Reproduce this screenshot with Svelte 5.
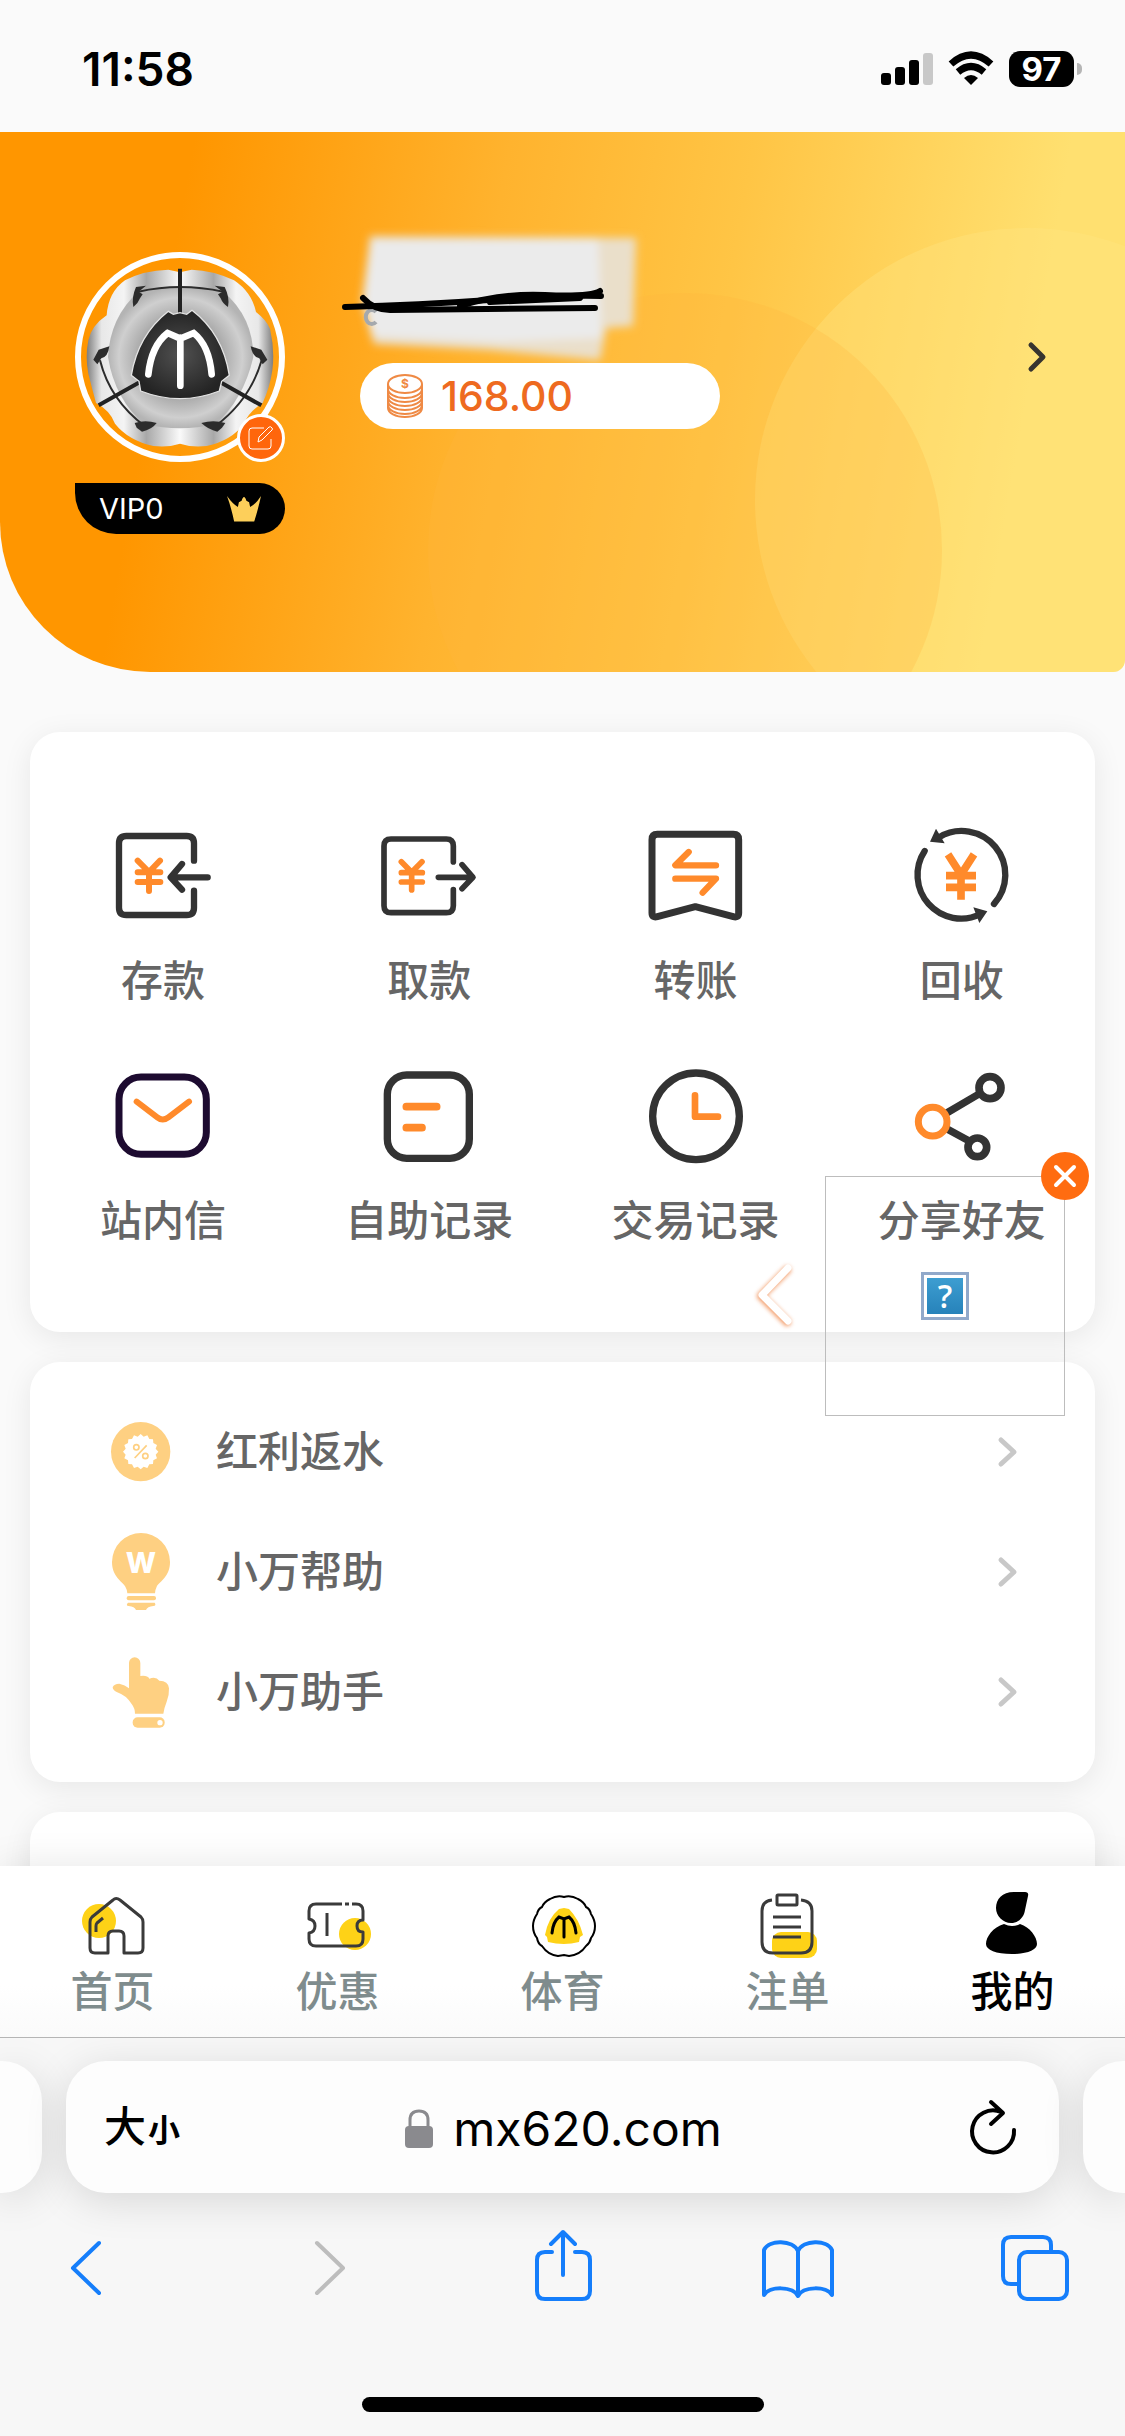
<script>
  const actions = [
    { icon: 'deposit', label: '存款' },
    { icon: 'withdraw', label: '取款' },
    { icon: 'transfer', label: '转账' },
    { icon: 'recycle', label: '回收' },
    { icon: 'mail', label: '站内信' },
    { icon: 'records', label: '自助记录' },
    { icon: 'history', label: '交易记录' },
    { icon: 'share', label: '分享好友' },
  ];

  const links = [
    { icon: 'rebate', label: '红利返水' },
    { icon: 'help', label: '小万帮助' },
    { icon: 'assistant', label: '小万助手' },
  ];

  const tabs = [
    { icon: 'home', label: '首页' },
    { icon: 'coupon', label: '优惠' },
    { icon: 'sports', label: '体育' },
    { icon: 'orders', label: '注单' },
    { icon: 'me', label: '我的', active: true },
  ];

  // Serrated edge of the discount seal
  const seal = Array.from({ length: 32 }, (_, i) => {
    const r = i % 2 ? 46 : 53;
    const a = (i * Math.PI) / 16;
    return `${Math.round(242 + r * Math.cos(a))},${Math.round(215 + r * Math.sin(a))}`;
  }).join(' ');

  let widgetOpen = $state(true);
</script>

{#snippet actionIcon(name)}
  {#if name === 'deposit'}
    <svg class="action-icon" viewBox="165 84 288 288" aria-hidden="true">
      <g class="ink" stroke-width="19">
        <path d="M402 182V130Q402 108 380 108H199Q177 108 177 130V323Q177 345 199 345H380Q402 345 402 323V272" />
        <path d="M334 232H443M366 192L332 232L366 269" />
      </g>
      <path class="amber" stroke-width="18" d="M233 182L267 216L300 182M233 217H301M233 246H301M267 216V273" />
    </svg>
  {:else if name === 'withdraw'}
    <svg class="action-icon" viewBox="963 84 288 288" aria-hidden="true">
      <g class="ink" stroke-width="17">
        <path d="M1180 186V138Q1180 117 1159 117H993Q972 117 972 138V317Q972 338 993 338H1159Q1180 338 1180 317V269" />
        <path d="M1135 232H1236M1206 194L1239 232L1206 266" />
      </g>
      <path class="amber" stroke-width="17" d="M1024 185L1055 217L1086 185M1024 218H1087M1024 246H1087M1055 217V270" />
    </svg>
  {:else if name === 'transfer'}
    <svg class="action-icon" viewBox="0 0 288 288" aria-hidden="true">
      <path class="ink" stroke-width="21" d="M28 19H256Q272 19 272 35V255Q272 270 256 266L142 236L28 266Q12 270 12 255V35Q12 19 28 19Z" />
      <path class="amber" stroke-width="19" d="M122 72L82 112H204M82 152H204L164 194" />
    </svg>
  {:else if name === 'recycle'}
    <svg class="action-icon" viewBox="0 0 288 288" aria-hidden="true">
      <path class="ink" stroke-width="19" d="M240 228A131 131 0 0 0 75 28M32 69A131 131 0 0 0 200 258" />
      <path fill="#333" d="M48 41L66 2L92 46ZM178 238L220 250L196 285Z" />
      <path fill="none" stroke="#ff8a2b" stroke-width="23" d="M102 79L141 140L180 79M141 138V215M96 143H186M96 178H186" />
    </svg>
  {:else if name === 'mail'}
    <svg class="action-icon" viewBox="165 804 288 288" aria-hidden="true">
      <rect x="177" y="831" width="262" height="232" rx="66" fill="none" stroke="#1d0b30" stroke-width="21" />
      <path class="amber" stroke-width="18" d="M230 905L292 952Q308 965 325 952L387 905" />
    </svg>
  {:else if name === 'records'}
    <svg class="action-icon" viewBox="963 804 288 288" aria-hidden="true">
      <rect class="ink" x="982" y="825" width="246" height="250" rx="58" stroke-width="22" />
      <path class="amber" stroke-width="23" d="M1039 920H1130M1039 983H1086" />
    </svg>
  {:else if name === 'history'}
    <svg class="action-icon" viewBox="0 0 288 288" aria-hidden="true">
      <circle class="ink" cx="144" cy="145" r="130" stroke-width="22" />
      <path class="amber" stroke-width="20" d="M141 82V146H210" />
    </svg>
  {:else}
    <svg class="action-icon" viewBox="0 0 288 288" aria-hidden="true">
      <path class="ink" stroke-width="22" d="M98 135L193 79M98 182L160 216" />
      <circle class="ink" cx="228" cy="59" r="33" stroke-width="23" />
      <circle class="ink" cx="190" cy="238" r="28" stroke-width="23" />
      <circle class="amber" cx="56" cy="161" r="43" stroke-width="21" />
    </svg>
  {/if}
{/snippet}

{#snippet linkIcon(name)}
  {#if name === 'rebate'}
    <svg class="link-icon" viewBox="126 99 234 234" aria-hidden="true">
      <circle cx="242" cy="215" r="89" fill="#fed082" />
      <polygon points={seal} fill="#fff" />
      <g fill="none" stroke="#fed082" stroke-width="5">
        <circle cx="229" cy="202" r="8" />
        <circle cx="256" cy="228" r="8" />
        <path d="M260 196L224 234" />
      </g>
    </svg>
  {:else if name === 'help'}
    <svg class="link-icon" viewBox="126 459 234 234" aria-hidden="true">
      <g fill="#fed082">
        <path d="M243 459A87 87 0 0 1 330 546C330 590 300 603 290 620Q285 630 285 640H202Q202 630 196 620C186 603 156 590 156 546A87 87 0 0 1 243 459Z" />
        <rect x="200" y="648" width="88" height="13" rx="6" />
        <path d="M204 668H284Q290 676 280 678Q262 680 258 690H228Q224 680 206 678Q196 676 204 668Z" />
      </g>
      <text x="243" y="579" class="bulb-letter">W</text>
    </svg>
  {:else}
    <svg class="link-icon" viewBox="126 819 234 234" aria-hidden="true">
      <g fill="#fed082">
        <path d="M207 849A17 17 0 0 1 241 849V888Q262 885 268 896Q288 889 298 902Q325 902 327 925Q328 945 320 965Q312 985 310 1001H225Q225 985 215 972Q198 945 170 936Q158 930 158 922Q162 911 178 911Q195 915 207 925Z" />
        <rect x="218" y="1012" width="96" height="31" rx="15" />
      </g>
      <circle cx="300" cy="1028" r="8" fill="#fff" />
    </svg>
  {/if}
{/snippet}

{#snippet tabIcon(name)}
  <svg class="tab-icon" viewBox="0 0 66 66" aria-hidden="true">
    {#if name === 'home'}
      <circle cx="19" cy="31" r="17" fill="#fed217" />
      <g class="line">
        <path d="M28 63V46Q28 41 33 41H39Q44 41 44 46V63H58Q63 63 63 58V32Q63 29 61 27L40 10Q36 7 33 10L12 27Q10 29 10 32V58Q10 63 15 63Z" />
        <path d="M23 28L17 33Q16 34 16 36V42" />
      </g>
    {:else if name === 'coupon'}
      <circle cx="50" cy="44" r="16" fill="#fed217" />
      <g class="line">
        <path d="M37 14H11Q4 14 4 21V29Q10 30 10 36Q10 42 4 43V49Q4 56 11 56H51Q58 56 58 49V42Q52 42 52 36Q52 30 58 30V21Q58 14 51 14H47M40 14H44" />
        <path d="M22 23V46" />
      </g>
    {:else if name === 'sports'}
      <path fill="#fed217" d="M29 19L34 18L39 19Q49 29 53 45L50 47L49 52Q34 56 18 52L17 47L15 45Q18 28 29 19Z" />
      <path fill="none" stroke="#000" stroke-width="2" d="M34 7Q41 5 48 9Q54 12 56 17Q60 19 61 24Q65 30 65 36Q65 43 61 48Q60 53 56 56Q50 65 39 66L34 65L28 66Q18 65 12 56Q8 54 7 48Q3 43 3 36Q3 30 7 24Q8 19 12 17Q14 12 20 9Q27 5 34 7Z" />
      <path fill="none" stroke="#000" stroke-width="3" stroke-linecap="round" d="M22 43Q23 32 29 27L34 29L39 27Q45 32 46 43M34 29V47" />
    {:else if name === 'orders'}
      <rect x="17" y="42" width="45" height="26" rx="9" fill="#fed217" />
      <g class="line">
        <path d="M17 10Q7 11 7 21V52Q7 63 18 63H46Q57 63 57 52V21Q57 11 46 10" />
        <rect x="22" y="5" width="20" height="10" rx="1" />
        <path d="M18 27H46M18 37H46M18 47H46" />
      </g>
    {:else}
      <path d="M48 6Q49 2 45 2H34C22 2 16 9 16 18C16 26 23 33 31 33C39 33 44 27 45 20Z" />
      <path d="M24 34Q32 38 40 34C50 37 57 47 57 54C57 60 47 64 32 64C16 64 6 60 6 54C6 47 13 37 24 34Z" />
    {/if}
  </svg>
{/snippet}

<div class="phone">
  <header class="status">
    <time>11:58</time>
    <div class="indicators">
      <svg width="52" height="36" viewBox="0 0 52 36" aria-label="信号">
        <rect x="0" y="22" width="10" height="12" rx="3" />
        <rect x="14" y="16" width="10" height="18" rx="3" />
        <rect x="28" y="9" width="10" height="25" rx="3" />
        <rect x="42" y="2" width="10" height="32" rx="3" fill="#c8c8c8" />
      </svg>
      <svg width="46" height="36" viewBox="0 0 46 36" aria-label="Wi-Fi">
        <g fill="none" stroke="#000" stroke-width="7">
          <path d="M3 13Q23 -5 43 13" />
          <path d="M10 21Q23 10 36 21" />
        </g>
        <path d="M23 34L16 27Q23 21 30 27Z" />
      </svg>
      <div class="battery"><span>97</span></div>
    </div>
  </header>

  <main>
    <section class="hero">
      <svg class="hero-art" viewBox="0 0 1125 540" preserveAspectRatio="xMaxYMin slice" aria-hidden="true">
        <circle cx="1027" cy="368" r="272" fill="#ffe580" fill-opacity=".38" />
        <circle cx="685" cy="418" r="257" fill="#ffb53c" fill-opacity=".26" />
      </svg>
      <div class="profile">
        <div class="avatar">
          <svg viewBox="105 95 630 630" aria-label="头像">
            <defs>
              <linearGradient id="shell" x1="0" y1="0" x2="1" y2="0">
                <stop offset="0" stop-color="#7d7d7d" />
                <stop offset=".08" stop-color="#e8e8e8" />
                <stop offset=".2" stop-color="#f4f4f4" />
                <stop offset=".32" stop-color="#a8a8a8" />
                <stop offset=".5" stop-color="#fafafa" />
                <stop offset=".68" stop-color="#a8a8a8" />
                <stop offset=".8" stop-color="#f4f4f4" />
                <stop offset=".92" stop-color="#e8e8e8" />
                <stop offset="1" stop-color="#7d7d7d" />
              </linearGradient>
              <radialGradient id="ball">
                <stop offset="0" stop-color="#8a8a8a" />
                <stop offset=".55" stop-color="#a6a6a6" />
                <stop offset=".85" stop-color="#cfcfcf" />
                <stop offset="1" stop-color="#b4b4b4" />
              </radialGradient>
              <radialGradient id="badge">
                <stop offset="0" stop-color="#505050" />
                <stop offset="1" stop-color="#242424" />
              </radialGradient>
            </defs>
            <path fill="url(#shell)" d="M420 156L385 148Q310 150 255 180Q205 215 200 285Q155 315 145 360Q135 410 145 460Q155 500 168 548Q210 570 225 610Q265 660 340 677Q385 682 420 670Q455 682 500 677Q575 660 612 610Q625 575 668 548Q690 500 697 450Q705 390 690 325Q680 300 648 275Q635 215 582 180Q520 150 455 148Z" />
            <path fill="url(#ball)" d="M295 214Q420 186 550 214Q640 290 640 410Q610 540 525 612Q420 636 315 612Q225 540 204 410Q210 290 295 214Z" />
            <g fill="none" stroke="#2c2c2c" stroke-width="6">
              <path d="M295 214Q420 186 550 214M180 420Q210 540 315 618M665 420Q630 540 525 618" />
            </g>
            <g fill="#2c2c2c">
              <path d="M318 196L288 200Q274 232 280 260Q294 250 300 234L308 222L296 214Z" />
              <path d="M524 196L554 200Q570 232 564 260Q548 250 542 234L534 222L548 214Z" />
              <path d="M208 378L176 388L160 418L172 432L184 414Q204 410 208 378Z" />
              <path d="M632 378L664 388L682 418L668 432L658 414Q638 410 632 378Z" />
              <path d="M284 608Q316 598 350 608Q335 628 306 634L290 622Z" />
              <path d="M556 608Q520 598 484 608Q505 628 532 634L546 622Z" />
            </g>
            <path stroke="#222" stroke-width="12" fill="none" d="M420 145V290M176 555L304 483M664 555L536 483" />
            <path fill="url(#badge)" stroke="#e4e4e4" stroke-width="4" d="M385 273L400 282L420 277L440 282L456 270Q548 340 568 465L545 483L538 512Q420 558 302 512L297 483L274 465Q294 345 385 273Z" />
            <path fill="none" stroke="#fff" stroke-width="20" stroke-linecap="round" d="M325 462Q334 376 383 338L421 355L461 338Q508 376 515 462M421 352V496" />
            <circle cx="420" cy="410" r="306" fill="none" stroke="#fff" stroke-width="18" />
          </svg>
          <button class="edit" aria-label="编辑头像">
            <svg viewBox="0 0 42 42" aria-hidden="true">
              <path d="M24 11H12Q9 11 9 14V29Q9 32 12 32H28Q31 32 31 29V22M18 25L19 20L29 10Q31 9 32 11Q33 12 32 13L22 23Z" />
            </svg>
          </button>
        </div>
        <div class="account">
          <svg class="masked" viewBox="0 0 300 111" aria-label="用户名已隐藏">
            <defs>
              <filter id="soft" x="-20%" y="-20%" width="140%" height="140%">
                <feGaussianBlur stdDeviation="4" />
              </filter>
            </defs>
            <g filter="url(#soft)">
              <path fill="#eadfca" d="M10 -16L276 -14L273 74L246 76L240 108L130 98L14 92L2 50Z" />
              <path fill="#ebebeb" d="M12 -12L238 -14L242 86L140 90L12 84L4 50Z" />
            </g>
            <path d="M16 60A6 7 0 1 0 16 70" fill="none" stroke="#a5a9ad" stroke-width="4" />
            <g fill="none" stroke="#000" stroke-width="6" stroke-linecap="round" stroke-linejoin="round">
              <path d="M-15 55Q60 53 129 48T241 44" />
              <path d="M3 46Q14 58 30 58L235 56" />
              <path d="M100 54Q140 41 185 43T240 39M130 50L220 46" />
            </g>
          </svg>
          <div class="balance">
            <svg width="36" height="44" viewBox="0 0 36 44" aria-hidden="true">
              <g fill="none" stroke="#ef8a45" stroke-width="2">
                <ellipse cx="18" cy="10" rx="17" ry="9" />
                <path d="M1 10V34A17 9 0 0 0 35 34V10M1 15A17 9 0 0 0 35 15M1 19A17 9 0 0 0 35 19M1 23A17 9 0 0 0 35 23M1 27A17 9 0 0 0 35 27M1 31A17 9 0 0 0 35 31" />
              </g>
              <text x="18" y="14" class="coin">$</text>
            </svg>
            <span>168.00</span>
          </div>
        </div>
        <button class="more" aria-label="账户详情">
          <svg width="20" height="32" viewBox="0 0 20 32" aria-hidden="true">
            <path d="M4 4L16 16L4 28" fill="none" stroke="#37342f" stroke-width="5" stroke-linecap="round" stroke-linejoin="round" />
          </svg>
        </button>
      </div>
      <div class="vip">
        <span>VIP0</span>
        <svg width="34" height="26" viewBox="563 828 100 76" aria-hidden="true">
          <path fill="#fdcf5a" d="M563 828Q580 852 595 860L598 846L606 842Q613 820 620 842L628 846L631 860Q648 852 663 828Q655 865 643 903H584Q575 860 563 828Z" />
        </svg>
      </div>
    </section>

    <div class="cards">
      <section class="card actions">
        {#each actions as item}
          <button class="action">
            {@render actionIcon(item.icon)}
            <span>{item.label}</span>
          </button>
        {/each}
        {#if widgetOpen}
          <aside class="widget">
            <div class="missing">?</div>
            <svg class="pull" viewBox="0 0 48 72" aria-hidden="true">
              <path class="glow" d="M37 10L11 36L37 62" />
              <path class="core" d="M38 8L12 35L38 61" />
            </svg>
            <button class="close" aria-label="关闭" onclick={() => (widgetOpen = false)}>
              <svg viewBox="0 0 48 48" aria-hidden="true"><path d="M15 15L33 33M33 15L15 33" /></svg>
            </button>
          </aside>
        {/if}
      </section>

      <section class="card links">
        {#each links as item}
          <a href="#{item.icon}">
            {@render linkIcon(item.icon)}
            <span>{item.label}</span>
            <svg width="20" height="32" viewBox="0 0 20 32" aria-hidden="true">
              <path d="M4 4L17 16L4 28" fill="none" stroke="#c8c8c8" stroke-width="5" stroke-linecap="round" stroke-linejoin="round" />
            </svg>
          </a>
        {/each}
      </section>

      <section class="card next"></section>
    </div>
  </main>

  <nav class="tabs">
    {#each tabs as tab}
      <a href="#{tab.icon}" class:active={tab.active}>
        {@render tabIcon(tab.icon)}
        <span>{tab.label}</span>
      </a>
    {/each}
  </nav>

  <footer class="browser">
    <div class="pages">
      <div class="peek left"></div>
      <div class="address">
        <button class="textsize" aria-label="文字大小"><span class="big">大</span><span class="small">小</span></button>
        <button class="url">
          <svg width="28" height="40" viewBox="0 0 28 40" aria-hidden="true">
            <rect x="0" y="17" width="28" height="22" rx="4" fill="#8a8a8e" />
            <path d="M5 18V11Q5 2 14 2T23 11V18" fill="none" stroke="#8a8a8e" stroke-width="3" />
          </svg>
          <span>mx620.com</span>
        </button>
        <button class="reload" aria-label="重新载入">
          <svg width="60" height="60" viewBox="0 0 60 60" aria-hidden="true">
            <path d="M51 31A21 21 0 1 1 38 13M28 3L40 14L28 25" />
          </svg>
        </button>
      </div>
      <div class="peek right"></div>
    </div>
    <div class="tools">
      <button aria-label="后退"><svg viewBox="0 0 90 90"><path d="M57 20L31 45L57 70" /></svg></button>
      <button aria-label="前进" disabled><svg viewBox="0 0 90 90"><path d="M37 20L63 45L37 70" /></svg></button>
      <button aria-label="分享">
        <svg viewBox="0 0 90 90"><path d="M34 29H27Q19 29 19 37V68Q19 76 27 76H64Q72 76 72 68V37Q72 29 64 29H57M45 52V9M33 21L45 9L57 21" /></svg>
      </button>
      <button aria-label="书签">
        <svg viewBox="0 0 90 90"><path d="M43 28C38 17 14 16 9 27V72C14 63 38 63 43 73C48 63 72 63 77 72V27C72 16 48 17 43 28V73" /></svg>
      </button>
      <button aria-label="标签页">
        <svg viewBox="0 0 90 90"><path d="M25 61H18Q10 61 10 53V22Q10 14 18 14H50Q58 14 58 22V29" /><rect x="26" y="29" width="48" height="47" rx="8" /></svg>
      </button>
    </div>
    <div class="grip"></div>
  </footer>
</div>

<style>
  :global(body) {
    background: #fafafa;
  }

  .phone {
    display: flex;
    flex-direction: column;
    height: 100vh;
    overflow: hidden;
    color: #000;
    background: #fafafa;
    font-family: Inter, 'Noto Sans CJK SC', sans-serif;
  }

  button {
    margin: 0;
    padding: 0;
    border: 0;
    background: none;
    color: inherit;
    font: inherit;
  }

  a {
    color: inherit;
    text-decoration: none;
  }

  svg {
    display: block;
    flex: none;
    overflow: visible;
  }

  .status {
    display: flex;
    flex: none;
    align-items: center;
    justify-content: space-between;
    height: 132px;
    padding: 6px 51px 0 82px;
    box-sizing: border-box;
  }

  time {
    font-size: 46px;
    font-weight: 600;
    line-height: 60px;
  }

  .indicators {
    display: flex;
    align-items: center;
    gap: 15px;
  }

  .battery {
    position: relative;
    width: 65px;
    border-radius: 11px;
    background: #000;
    color: #fff;
    font-size: 33px;
    font-weight: 700;
    line-height: 36px;
    text-align: center;
  }

  .battery::after {
    content: '';
    position: absolute;
    top: 12px;
    right: -8px;
    width: 5px;
    height: 12px;
    border-radius: 0 5px 5px 0;
    background: #b5b5b5;
  }

  main {
    flex: 1;
    min-height: 0;
    overflow: hidden;
  }

  .hero {
    position: relative;
    height: 540px;
    padding: 120px 78px 0 75px;
    box-sizing: border-box;
    overflow: hidden;
    border-radius: 0 0 12px 150px;
    background: linear-gradient(100deg, #ff9600 16%, #ffb32e 42%, #ffc545 62%, #ffe070 88%);
  }

  .hero-art {
    position: absolute;
    inset: 0;
    width: 100%;
    height: 100%;
  }

  .profile {
    position: relative;
    display: flex;
    align-items: center;
  }

  .avatar {
    position: relative;
    width: 210px;
    margin-right: 75px;
  }

  .edit {
    position: absolute;
    right: 0;
    bottom: 0;
    width: 48px;
    height: 48px;
    box-sizing: border-box;
    border: 3px solid #fff;
    border-radius: 50%;
    background: #ff660c;
  }

  .edit path {
    fill: none;
    stroke: #fff;
    stroke-width: 1;
  }

  .account {
    align-self: flex-start;
    width: 360px;
  }

  .masked {
    width: 300px;
    height: 111px;
  }

  .balance {
    position: relative;
    display: flex;
    align-items: center;
    gap: 18px;
    padding-left: 27px;
    border-radius: 33px;
    background: #fff;
    color: #ee6a1f;
    font-size: 41px;
    font-weight: 500;
    line-height: 66px;
  }

  .coin {
    fill: #ef8a45;
    font-size: 12px;
    font-weight: 700;
    text-anchor: middle;
  }

  .more {
    margin-left: auto;
  }

  .vip {
    position: relative;
    display: flex;
    align-items: center;
    justify-content: space-between;
    width: 210px;
    margin-top: 21px;
    padding: 0 24px;
    box-sizing: border-box;
    border-radius: 0 26px 26px 42px;
    background: #000;
    color: #fff;
    font-size: 29px;
    line-height: 51px;
  }

  .cards {
    display: grid;
    gap: 30px;
    padding: 60px 30px 0;
  }

  .card {
    position: relative;
    border-radius: 30px;
    background: #fff;
    box-shadow: 0 6px 30px rgba(0, 0, 0, 0.08);
  }

  .actions {
    z-index: 1;
    display: grid;
    grid-template-columns: repeat(4, 1fr);
    row-gap: 57px;
    padding: 96px 0 81px;
  }

  .action {
    display: flex;
    flex-direction: column;
    align-items: center;
    gap: 27px;
    color: #666;
    font-size: 42px;
    font-weight: 500;
    line-height: 60px;
    white-space: nowrap;
  }

  .action-icon {
    width: 96px;
    height: 96px;
  }

  .ink,
  .amber {
    fill: none;
    stroke: #333;
    stroke-linecap: round;
    stroke-linejoin: round;
  }

  .amber {
    stroke: #ff8a2b;
  }

  .widget {
    position: absolute;
    right: 30px;
    bottom: -84px;
    display: grid;
    place-items: center;
    width: 240px;
    height: 240px;
    box-sizing: border-box;
    border: 1px solid #bdbdbd;
  }

  .missing {
    width: 48px;
    height: 48px;
    box-sizing: border-box;
    border: 3px solid #91a9ca;
    outline: 3px solid #fff;
    outline-offset: -6px;
    background: linear-gradient(#3fa0d3, #2580b8);
    color: #fff;
    font-family: 'Open Sans', sans-serif;
    font-size: 32px;
    font-weight: 600;
    line-height: 42px;
    text-align: center;
  }

  .pull {
    position: absolute;
    left: -76px;
    width: 48px;
    height: 72px;
  }

  .pull path {
    fill: none;
    stroke-linecap: round;
    stroke-linejoin: round;
  }

  .pull .glow {
    stroke: #f29a66;
    stroke-width: 8;
    filter: blur(2px);
  }

  .pull .core {
    stroke: #fff;
    stroke-width: 7;
  }

  .close {
    position: absolute;
    top: -25px;
    right: -25px;
    width: 48px;
    height: 48px;
    border-radius: 50%;
    background: #ff6c10;
  }

  .close path {
    stroke: #fff;
    stroke-width: 4;
    stroke-linecap: round;
  }

  .links {
    padding: 30px 0;
  }

  .links a {
    display: flex;
    align-items: center;
    height: 120px;
    padding: 0 78px 0 72px;
    color: #666;
    font-size: 42px;
    font-weight: 500;
    line-height: 60px;
  }

  .links span {
    flex: 1;
    margin-left: 36px;
  }

  .link-icon {
    width: 78px;
    height: 78px;
  }

  .bulb-letter {
    fill: #fff;
    font-size: 86px;
    font-weight: 800;
    text-anchor: middle;
  }

  .next {
    height: 360px;
  }

  .tabs {
    position: relative;
    z-index: 2;
    display: grid;
    flex: none;
    grid-template-columns: repeat(5, 1fr);
    padding: 24px 0 15px;
    background: linear-gradient(#fff 70%, #fafafa);
    box-shadow: 0 0 36px rgba(0, 0, 0, 0.1);
  }

  .tabs a {
    display: flex;
    flex-direction: column;
    align-items: center;
    gap: 6px;
    color: #7f8c8d;
    font-size: 42px;
    font-weight: 500;
    line-height: 60px;
  }

  .tabs a.active {
    color: #000;
  }

  .tab-icon {
    width: 66px;
    height: 66px;
  }

  .line {
    fill: none;
    stroke: #3a3a3a;
    stroke-width: 3;
    stroke-linejoin: round;
  }

  .browser {
    position: relative;
    z-index: 3;
    flex: none;
    padding: 23px 0 24px;
    overflow: hidden;
    border-top: 1px solid #b5b5b5;
    background: #f7f7f7;
  }

  .pages {
    display: flex;
    gap: 24px;
    height: 132px;
  }

  .peek,
  .address {
    background: #fdfdfd;
    box-shadow: 0 8px 42px rgba(0, 0, 0, 0.13);
  }

  .peek {
    width: 42px;
  }

  .peek.left {
    border-radius: 0 40px 40px 0;
  }

  .peek.right {
    border-radius: 40px 0 0 40px;
  }

  .address {
    display: grid;
    flex: 1;
    grid-template-columns: 1fr auto 1fr;
    align-items: center;
    padding: 4px 36px 0 38px;
    border-radius: 40px;
  }

  .textsize {
    display: flex;
    align-items: baseline;
    gap: 2px;
    font-weight: 500;
    line-height: 60px;
  }

  .big {
    font-size: 42px;
  }

  .small {
    font-size: 32px;
    font-weight: 700;
  }

  .url {
    display: flex;
    align-items: center;
    gap: 20px;
    font-size: 48px;
    line-height: 66px;
  }

  .reload {
    justify-self: end;
  }

  .reload path {
    fill: none;
    stroke: #000;
    stroke-width: 4;
    stroke-linecap: round;
    stroke-linejoin: round;
  }

  .tools {
    display: flex;
    justify-content: space-between;
    margin: 30px 0 84px;
    padding: 0 42px;
  }

  .tools button {
    color: #157efb;
  }

  .tools button:disabled {
    color: #bdbdbd;
  }

  .tools svg {
    width: 90px;
    height: 90px;
    fill: none;
    stroke: currentColor;
    stroke-width: 4;
    stroke-linecap: round;
    stroke-linejoin: round;
  }

  .grip {
    width: 402px;
    height: 15px;
    margin: 0 auto;
    border-radius: 8px;
    background: #000;
  }
</style>
